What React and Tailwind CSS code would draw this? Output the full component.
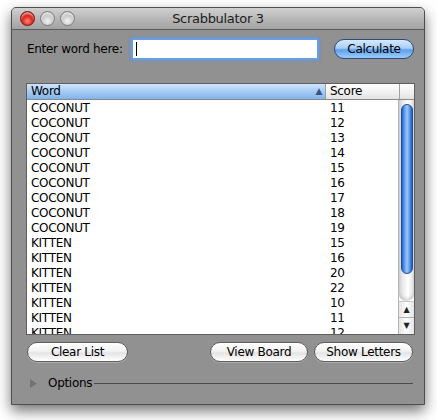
import React from 'react';

const rows = [
  ['COCONUT', 11], ['COCONUT', 12], ['COCONUT', 13], ['COCONUT', 14], ['COCONUT', 15],
  ['COCONUT', 16], ['COCONUT', 17], ['COCONUT', 18], ['COCONUT', 19],
  ['KITTEN', 15], ['KITTEN', 16], ['KITTEN', 20], ['KITTEN', 22], ['KITTEN', 10],
  ['KITTEN', 11], ['KITTEN', 12],
];

const font = "font-['DejaVu_Sans',sans-serif] tracking-[-0.3px]";

function Light({ red }) {
  return (
    <div
      className={
        red
          ? 'h-[15px] w-[15px] rounded-full border border-[#7a1010] bg-[radial-gradient(circle_at_50%_70%,#ff8a7a_0%,#e0231b_45%,#9c0c08_100%)] shadow-[inset_0_2px_2px_rgba(255,255,255,0.6)]'
          : 'h-[15px] w-[15px] rounded-full border border-[#7d7d7d] bg-[radial-gradient(circle_at_50%_70%,#f4f4f4_0%,#c8c8c8_50%,#9a9a9a_100%)] shadow-[inset_0_2px_2px_rgba(255,255,255,0.7)]'
      }
    />
  );
}

function PillButton({ children, w }) {
  return (
    <button
      className={`flex h-[20px] items-center justify-center rounded-full border border-[#5e5e5e] bg-[linear-gradient(to_bottom,#ffffff_0%,#f3f3f3_45%,#e4e4e4_55%,#ffffff_100%)] text-[12px] text-black shadow-[0_1px_0_rgba(255,255,255,0.25)] ${w}`}
    >
      {children}
    </button>
  );
}

export default function App() {
  return (
    <div className={`h-[420px] w-[437px] bg-white pl-[11px] pt-[7px] ${font}`}>
      <div className="flex h-[398px] w-[414px] flex-col overflow-hidden rounded-t-[5px] border border-[#4e4e4e] bg-[#919191] shadow-[0_6px_14px_rgba(0,0,0,0.55)]">
        {/* title bar */}
        <div className="relative flex h-[22px] shrink-0 items-center border-b border-[#5c5c5c] bg-[linear-gradient(to_bottom,#d0d0d0_0%,#b8b8b8_50%,#a2a2a2_100%)] pl-[8px]">
          <div className="flex gap-[5px]">
            <Light red />
            <Light />
            <Light />
          </div>
          <div className="absolute inset-0 flex items-center justify-center text-[13px] text-[#1c1c1c]">
            Scrabbulator 3
          </div>
        </div>

        {/* input row */}
        <div className="mt-[8px] flex h-[22px] items-center pl-[15px] pr-[10px]">
          <span className="text-[12px] text-black">Enter word here:</span>
          <div className="ml-[8px] flex h-[22px] w-[188px] items-center rounded-[2px] border-[2px] border-[#6a9fdc] bg-white shadow-[0_0_2px_1px_rgba(90,150,230,0.8)]">
            <div className="ml-[3px] h-[14px] w-[1px] bg-black" />
          </div>
          <div className="ml-auto flex h-[20px] w-[80px] items-center justify-center rounded-full border border-[#2c4a7c] bg-[linear-gradient(to_bottom,#d6e9fd_0%,#a9cff8_45%,#5f9fea_55%,#9ccefb_100%)] text-[12px] text-black">
            Calculate
          </div>
        </div>

        {/* table */}
        <div className="ml-[14px] mr-[9px] mt-[23px] flex h-[252px] flex-col border border-[#5f5f5f] bg-white">
          <div className="flex h-[16px] shrink-0 border-b border-[#8a8a8a] text-[12px] leading-[15px]">
            <div className="flex w-[298px] items-center justify-between bg-[linear-gradient(to_bottom,#cfe4fb_0%,#a6ccf4_50%,#7fb3ec_100%)] pl-[4px] pr-[3px]">
              <span>Word</span>
              <span className="text-[9px] text-[#35557e]">▲</span>
            </div>
            <div className="flex w-[74px] items-center border-l border-[#a0a0a0] bg-[linear-gradient(to_bottom,#ffffff_0%,#f2f2f2_50%,#e2e2e2_100%)] pl-[4px]">
              Score
            </div>
            <div className="flex-1 border-l border-[#a0a0a0] bg-[linear-gradient(to_bottom,#ffffff_0%,#f2f2f2_50%,#e2e2e2_100%)]" />
          </div>
          <div className="flex min-h-0 flex-1">
            <div className="flex-1 overflow-hidden pt-[1px]">
              {rows.map(([w, s], i) => (
                <div key={i} className="flex h-[15px] text-[12px] leading-[15px] text-black">
                  <span className="w-[299px] pl-[4px]">{w}</span>
                  <span className="pl-[4px]">{s}</span>
                </div>
              ))}
            </div>
            {/* scrollbar */}
            <div className="flex w-[16px] flex-col border-l border-[#b5b5b5]">
              <div className="flex flex-1 flex-col items-center rounded-b-[7px] bg-[linear-gradient(to_right,#d6d6d6_0%,#f7f7f7_45%,#ffffff_60%,#dedede_100%)] pt-[4px] shadow-[inset_0_-3px_3px_rgba(0,0,0,0.12)]">
                <div className="h-[170px] w-[12px] rounded-full border border-[#1f4f9e] bg-[linear-gradient(to_right,#1f62c8_0%,#6aa6ef_30%,#9cc7f8_50%,#5d9ae8_75%,#1d58bb_100%)]" />
              </div>
              <div className="flex h-[16px] items-center justify-center border-t border-[#c8c8c8] bg-[linear-gradient(to_right,#e4e4e4,#ffffff,#e4e4e4)] text-[8px] text-[#222]">
                ▲
              </div>
              <div className="flex h-[17px] items-center justify-center border-t border-[#b0b0b0] bg-[linear-gradient(to_right,#e4e4e4,#ffffff,#e4e4e4)] text-[8px] text-[#222]">
                ▼
              </div>
            </div>
          </div>
        </div>

        {/* buttons */}
        <div className="mt-[7px] flex items-center pl-[15px] pr-[11px]">
          <PillButton w="w-[101px]">Clear List</PillButton>
          <div className="ml-auto flex gap-[6px]">
            <PillButton w="w-[98px]">View Board</PillButton>
            <PillButton w="w-[99px]">Show Letters</PillButton>
          </div>
        </div>

        {/* options disclosure */}
        <div className="mt-[12px] flex items-center pl-[18px] pr-[11px]">
          <svg width="7" height="9" viewBox="0 0 7 9">
            <path d="M0 0 L7 4.5 L0 9 Z" fill="#737373" />
          </svg>
          <span className="ml-[11px] text-[12px] text-black">Options</span>
          <div className="ml-[2px] h-px flex-1 bg-[#4c4c4c]" />
        </div>
      </div>
    </div>
  );
}
